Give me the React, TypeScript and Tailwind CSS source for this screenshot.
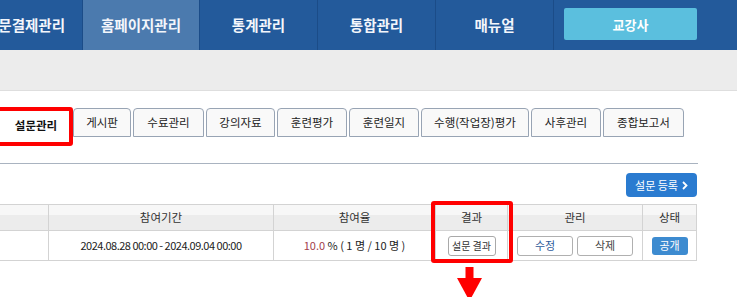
export default function App() {
  const tabs: { label: string; w: string }[] = [
    { label: "게시판", w: "w-[58px]" },
    { label: "수료관리", w: "w-[71px]" },
    { label: "강의자료", w: "w-[69px]" },
    { label: "훈련평가", w: "w-[70px]" },
    { label: "훈련일지", w: "w-[70px]" },
    { label: "수행(작업장)평가", w: "w-[108px]" },
    { label: "사후관리", w: "w-[70px]" },
    { label: "종합보고서", w: "w-[81px]" },
  ];
  const headCell =
    "flex items-center justify-center h-[26px] border-r border-b border-[#d3d3d3] bg-[linear-gradient(#f7f7f7_0,#f7f7f7_40%,#ececec_40%,#ececec_100%)] text-[11.5px] text-[#333] leading-none";
  const dataCell =
    "flex items-center justify-center h-[30px] border-r border-b border-[#d3d3d3] bg-white text-[11px] text-[#222] leading-none";
  return (
    <div className="relative w-[737px] h-[297px] overflow-hidden bg-white font-['Noto_Sans_CJK_KR','Noto_Sans',sans-serif]">
      {/* top navigation */}
      <nav className="flex h-[50px] bg-[#235a9b] text-[#f3f6fb] text-[14.5px] font-bold leading-none">
        <div className="flex w-[83px] shrink-0 items-center justify-end overflow-hidden whitespace-nowrap pr-[17px] border-r border-[#1b4c88]">
          문결제관리
        </div>
        <div className="flex w-[117px] shrink-0 items-center justify-center bg-[#4b7aae] border-r border-[#1b4c88]">
          홈페이지관리
        </div>
        <div className="flex w-[118px] shrink-0 items-center justify-center border-r border-[#1b4c88]">
          통계관리
        </div>
        <div className="flex w-[118px] shrink-0 items-center justify-center border-r border-[#1b4c88]">
          통합관리
        </div>
        <div className="flex w-[118px] shrink-0 items-center justify-center border-r border-[#1b4c88]">
          매뉴얼
        </div>
        <div className="ml-[10px] mt-[8px] flex h-[32px] w-[133px] items-center justify-center rounded-[2px] bg-[#5bbfde] text-[13px] text-white">
          교강사
        </div>
      </nav>

      {/* gray band */}
      <div className="h-[41px] bg-[#ececec] border-b border-[#dedede]" />

      {/* tab row */}
      <div className="flex h-[73px] w-[698px] items-start border-b border-[#a9b3c0] pt-[16px]">
        <div className="flex h-[38px] w-[72px] items-center justify-center bg-white text-[11.5px] font-bold text-[#111] leading-none">
          설문관리
        </div>
        <div className="ml-px mt-px flex gap-[2px]">
          {tabs.map((t) => (
            <div
              key={t.label}
              className={`${t.w} flex h-[29px] items-center justify-center rounded-t-[4px] border border-[#98a4b4] bg-[#f9f9f9] text-[11.5px] text-[#222] leading-none whitespace-nowrap`}
            >
              {t.label}
            </div>
          ))}
        </div>
      </div>

      {/* register button */}
      <div className="flex w-[697px] justify-end pt-[9px]">
        <div className="flex h-[24px] w-[71px] items-center justify-center gap-[4px] rounded-[4px] bg-[#2a7bd0] text-[11px] text-white leading-none">
          <span>설문 등록</span>
          <svg width="6" height="9" viewBox="0 0 6 9" fill="none">
            <path d="M1 1l3.5 3.5L1 8" stroke="white" strokeWidth="1.8" />
          </svg>
        </div>
      </div>

      {/* table */}
      <div className="mt-[7px] grid w-[697px] grid-cols-[49px_225px_162px_72px_135px_54px] border-t border-[#d3d3d3]">
        <div className={headCell}></div>
        <div className={headCell}>참여기간</div>
        <div className={headCell}>참여율</div>
        <div className={headCell}>결과</div>
        <div className={headCell}>관리</div>
        <div className={headCell}>상태</div>

        <div className={dataCell}></div>
        <div className={`${dataCell} tracking-[-0.5px]`}>2024.08.28 00:00 - 2024.09.04 00:00</div>
        <div className={dataCell}>
          <span className="text-[#a2404b]">10.0</span>
          <span className="whitespace-pre">&nbsp;% ( 1 명 / 10 명 )</span>
        </div>
        <div className={dataCell}>
          <div className="flex h-[20px] w-[48px] items-center justify-center rounded-[3px] border border-[#a9a9a9] bg-white text-[10px] text-[#333]">
            설문 결과
          </div>
        </div>
        <div className={`${dataCell} gap-[4px]`}>
          <div className="flex h-[20px] w-[56px] items-center justify-center rounded-[3px] border border-[#b0b0b0] bg-white text-[11px] text-[#2d5a9a]">
            수정
          </div>
          <div className="flex h-[20px] w-[56px] items-center justify-center rounded-[3px] border border-[#b0b0b0] bg-white text-[11px] text-[#444]">
            삭제
          </div>
        </div>
        <div className={dataCell}>
          <div className="flex h-[18px] w-[36px] items-center justify-center rounded-[3px] bg-[#3d8bd0] text-[11px] text-white">
            공개
          </div>
        </div>
      </div>

      {/* annotation overlays */}
      <div className="absolute left-[-4px] top-[107px] h-[39px] w-[77px] rounded-[3px] border-[4px] border-[#ff0000]" />
      <div className="absolute left-[431px] top-[201px] h-[62px] w-[82px] rounded-[3px] border-[4px] border-[#ff0000]" />
      <svg className="absolute left-[457px] top-[267px]" width="25" height="30" viewBox="0 0 25 30">
        <rect x="8.5" y="0" width="8" height="12" fill="#ff0000" />
        <polygon points="0,11 25,11 12.5,34" fill="#ff0000" />
      </svg>
    </div>
  );
}
